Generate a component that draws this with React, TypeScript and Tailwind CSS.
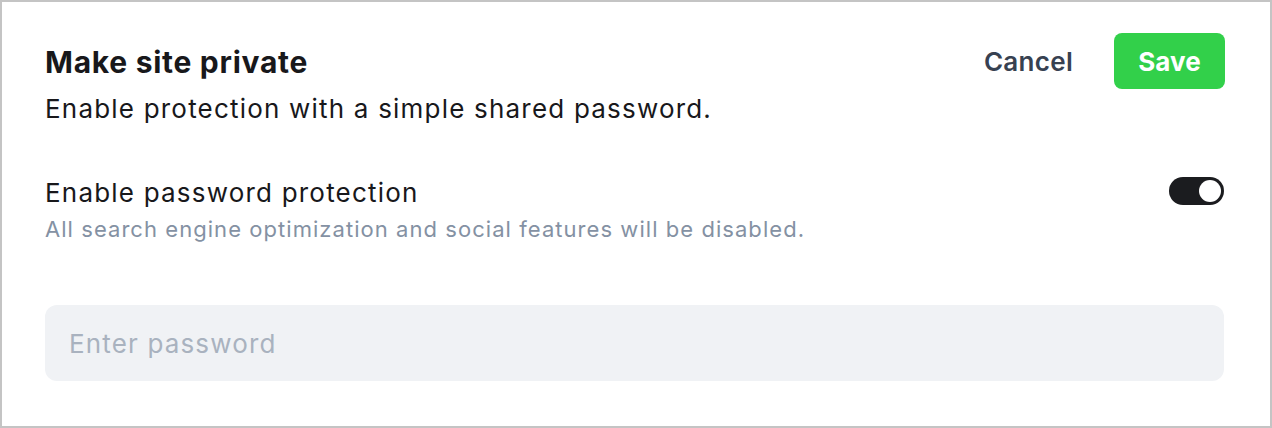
export default function App() {
  return (
    <div className="w-[1272px] h-[428px] border-2 border-[#c4c4c4] bg-white" style={{ fontFamily: "Inter, 'Noto Sans', sans-serif" }}>
      <div className="pl-[43px] pr-[45px] pt-[31px]">
        <div className="flex items-start justify-between">
          <div>
            <h1 className="text-[30px] leading-[58px] font-bold text-[#18181b] tracking-[0.72px]">Make site private</h1>
            <p className="text-[26px] leading-[36px] text-[#18181b] tracking-[1.2px]">Enable protection with a simple shared password.</p>
          </div>
          <div className="flex items-center gap-[41px]">
            <button className="text-[26px] font-semibold text-[#374151] tracking-[0.3px]">Cancel</button>
            <button className="w-[111px] h-[56px] rounded-[8px] bg-[#32d04a] text-white text-[26px] font-bold">Save</button>
          </div>
        </div>
        <div className="mt-[50px] flex items-start justify-between">
          <div>
            <div className="text-[26px] leading-[32px] text-[#18181b] tracking-[1.2px]">Enable password protection</div>
            <div className="text-[22px] leading-[28px] text-[#8491a3] mt-[6px] tracking-[1.05px]">All search engine optimization and social features will be disabled.</div>
          </div>
          <div className="mr-[1px] w-[55px] h-[28px] rounded-full bg-[#1b1c1f] flex items-center justify-end pr-[3px]">
            <div className="w-[22px] h-[22px] rounded-full bg-white" />
          </div>
        </div>
        <div className="mt-[62px] mr-[1px] h-[76px] rounded-[12px] bg-[#f0f2f5] flex items-center px-[24px]">
          <span className="text-[26px] text-[#a9b2bf] tracking-[1.15px]">Enter password</span>
        </div>
      </div>
    </div>
  );
}
